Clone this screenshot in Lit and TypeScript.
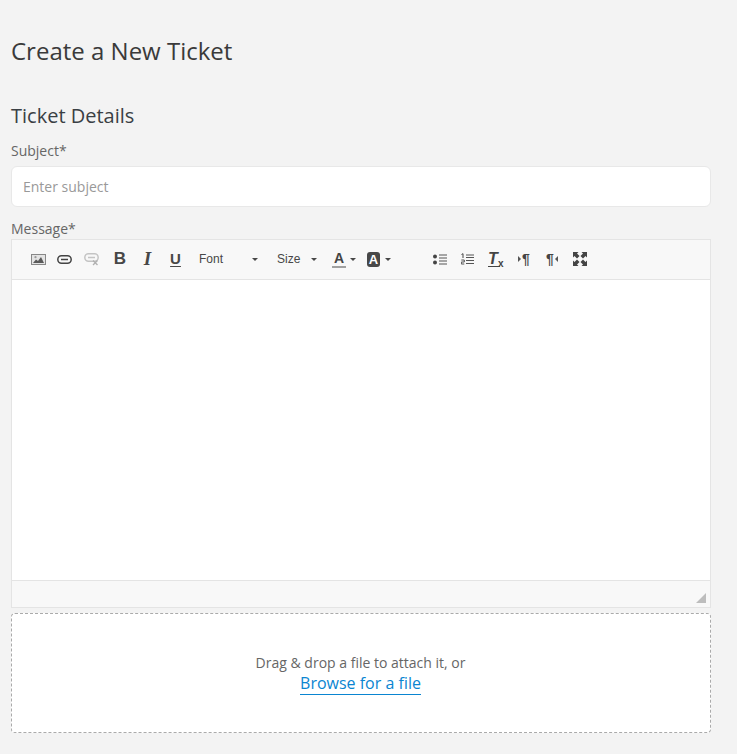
import { LitElement, html, css, svg } from "lit";
import { customElement } from "lit/decorators.js";

const caret = html`<span class="caret"></span>`;

@customElement("app-root")
export class AppRoot extends LitElement {
  static styles = css`
    :host { display: block; height: 754px; overflow: hidden; background: #f3f3f3; font-family: "Open Sans", sans-serif; color: #666; box-sizing: border-box; padding: 0 26px 0 11px; }
    h1 { margin: 0; padding-top: 34px; font-size: 24px; line-height: 33px; font-weight: 400; color: #3a3a3a; }
    h2 { margin: 0; padding-top: 35px; font-size: 20px; line-height: 27px; font-weight: 400; color: #3a3f44; }
    label { display: block; font-size: 14px; line-height: 19px; color: #666; }
    .subject-label { margin-top: 12px; }
    .subject { margin-top: 6px; height: 41px; box-sizing: border-box; background: #fff; border: 1px solid #e8e8e8; border-radius: 6px; padding: 0 11px; display: flex; align-items: center; font-size: 14px; color: #999; }
    .message-label { margin-top: 12px; height: 20px; line-height: 19px; }
    .editor { height: 369px; box-sizing: border-box; border: 1px solid #e4e4e4; display: flex; flex-direction: column; background: #f8f8f8; }
    .toolbar { height: 38px; padding-bottom: 1px; flex: none; display: flex; align-items: center; padding-left: 12px; border-bottom: 1px solid #e4e4e4; box-sizing: content-box; font-family: "Liberation Sans", sans-serif; color: #444; }
    .btn { flex: none; height: 20px; display: flex; align-items: center; justify-content: center; position: relative; }
    svg { display: block; }
    .w25 { width: 25px; } .w28 { width: 28px; } .w27 { width: 27px; } .w29 { width: 29px; }
    .glyph { font-size: 15px; line-height: 18px; color: #474747; }
    .b { font-weight: 700; font-size: 17px; }
    .i { font-family: "Liberation Serif", serif; font-weight: 700; font-style: italic; font-size: 19px; }
    .u { font-weight: 700; font-size: 15px; text-decoration: underline; text-underline-offset: 2px; }
    .combo { font-size: 12px; color: #474747; display: flex; align-items: center; box-sizing: border-box; }
    .font { width: 63px; margin-left: 9px; justify-content: space-between; padding-right: 4px; }
    .size { width: 44px; margin-left: 15px; justify-content: space-between; padding-right: 4px; }
    .caret { display: block; width: 0; height: 0; border-left: 3px solid transparent; border-right: 3px solid transparent; border-top: 3px solid #474747; flex: none; }
    .color { width: 24px; margin-left: 11px; justify-content: flex-start; height: 20px; }
    .fg { width: 14px; text-align: center; font-size: 14px; font-weight: 700; line-height: 15px; border-bottom: 2px solid #a0a0a0; color: #444; margin-right: 4px; }
    .bgc { width: 15px; height: 15px; border-radius: 3px; background: #484848; color: #fff; display: flex; align-items: center; justify-content: center; font-size: 13px; font-weight: 700; margin-right: 5px; }
    .gap2 { margin-left: 35px; }
    .tx { font-weight: 700; font-style: italic; font-size: 16px; color: #444; border-bottom: 1px solid #444; position: relative; width: 12px; line-height: 15px; margin-right: 3px; }
    .tx small { position: absolute; left: 10px; bottom: -5px; font-size: 10px; font-style: normal; font-weight: 700; }
    .para { font-size: 14px; font-weight: 700; display: flex; align-items: center; gap: 1px; color: #444; }
    .para i { display: block; width: 0; height: 0; border-top: 3px solid transparent; border-bottom: 3px solid transparent; }
    .para .r { border-left: 3px solid #555; }
    .para .l { border-right: 3px solid #555; }
    .content { height: 300px; flex: none; background: #fff; border-bottom: 1px solid #e4e4e4; }
    .foot { flex: 1; display: flex; align-items: flex-end; justify-content: flex-end; padding: 0 4px 4px 0; }
    .grip { width: 0; height: 0; border-left: 10px solid transparent; border-bottom: 10px solid #bdbdbd; }
    .drop { margin-top: 5px; height: 120px; box-sizing: border-box; border: 1px dashed #aaa; border-radius: 4px; background: #fff; display: flex; flex-direction: column; align-items: center; justify-content: center; padding: 1px 1px 0 0; }
    .drop p { margin: 0 0 1px; font-size: 14px; line-height: 19px; color: #666; }
    .drop a { font-size: 16px; line-height: 21px; color: #0a85d1; text-decoration: none; border-bottom: 1px solid #0a85d1; }
  `;

  render() {
    const s = svg;
    return html`
      <h1>Create a New Ticket</h1>
      <h2>Ticket Details</h2>
      <label class="subject-label">Subject*</label>
      <div class="subject">Enter subject</div>
      <label class="message-label">Message*</label>
      <div class="editor">
        <div class="toolbar">
          <span class="btn w28"><svg width="15" height="11" viewBox="0 0 15 11">${s`<rect x=".5" y=".5" width="14" height="10" fill="#e4e4e4" stroke="#888"/><path d="M2 9l3-3.500 2 1.500 3-4 3 6z" fill="#5a5a5a"/><circle cx="4.500" cy="3.200" r="1.100" fill="#999"/>`}</svg></span>
          <span class="btn w25"><svg width="15" height="9" viewBox="0 0 15 9">${s`<rect x=".8" y=".8" width="13.400" height="7.400" rx="3.700" fill="none" stroke="#444" stroke-width="1.500"/><path d="M4 4.500h7" stroke="#444" stroke-width="1.500"/>`}</svg></span>
          <span class="btn w29"><svg width="15" height="13" viewBox="0 0 15 13">${s`<rect x=".8" y=".8" width="13.400" height="7.400" rx="3.700" fill="none" stroke="#c4c4c4" stroke-width="1.500"/><path d="M4 4.500h7" stroke="#c4c4c4" stroke-width="1.500"/><path d="M9 7.500l4.500 4.500M13.500 7.500L9 12" stroke="#b0b0b0" stroke-width="1.300"/>`}</svg></span>
          <span class="btn w28 glyph b">B</span>
          <span class="btn w27 glyph i">I</span>
          <span class="btn w29 glyph u">U</span>
          <span class="btn combo font"><span>Font</span>${caret}</span>
          <span class="btn combo size"><span>Size</span>${caret}</span>
          <span class="btn color"><span class="fg">A</span>${caret}</span>
          <span class="btn color"><span class="bgc">A</span>${caret}</span>
          <span class="btn w28 gap2"><svg width="14" height="11" viewBox="0 0 14 11">${s`<circle cx="2" cy="2.500" r="2" fill="#444"/><circle cx="2" cy="8.500" r="2" fill="#444"/><path d="M6 1h8M6 4h8M6 7h8M6 10h8" stroke="#555" stroke-width="1"/>`}</svg></span>
          <span class="btn w27"><svg width="13" height="12" viewBox="0 0 13 12">${s`<path d="M.500 1.500L2 .7v4.300" fill="none" stroke="#444"/><path d="M.300 7h3v2h-3v2h3" fill="none" stroke="#444" stroke-width=".9"/><path d="M5 2h8M5 4.500h8M5 7.500h8M5 10.500h8" stroke="#555" stroke-width="1"/>`}</svg></span>
          <span class="btn w29"><span class="tx">T<small>x</small></span></span>
          <span class="btn w28"><span class="para"><i class="r"></i>¶</span></span>
          <span class="btn w28"><span class="para">¶<i class="l"></i></span></span>
          <span class="btn w28"><svg width="14" height="14" viewBox="0 0 14 14">${s`<path d="M0 0h5.500L4 1.500 6.500 4 4 6.500 1.500 4 0 5.500zM14 0v5.500L12.500 4 10 6.500 7.500 4 10 1.500 8.500 0zM0 14V8.500L1.500 10 4 7.500 6.500 10 4 12.500 5.500 14zM14 14H8.500L10 12.500 7.500 10 10 7.500 12.500 10 14 8.500z" fill="#444"/>`}</svg></span>
        </div>
        <div class="content"></div>
        <div class="foot"><span class="grip"></span></div>
      </div>
      <div class="drop">
        <p>Drag &amp; drop a file to attach it, or</p>
        <a href="#">Browse for a file</a>
      </div>
    `;
  }
}
